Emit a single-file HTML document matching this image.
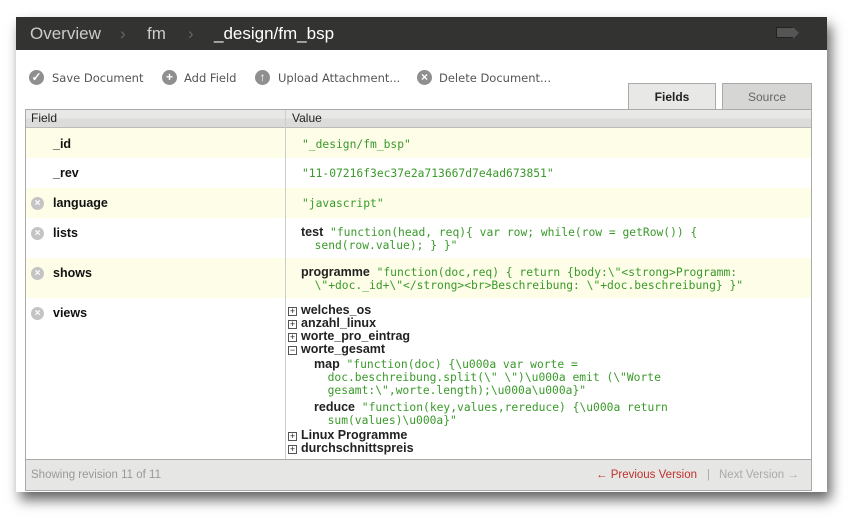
<!DOCTYPE html>
<html><head><meta charset="utf-8"><style>
*{margin:0;padding:0;box-sizing:border-box}
body{width:860px;height:524px;background:#fff;position:relative;overflow:hidden;font-family:"Liberation Sans",sans-serif}
.abs{position:absolute}
.win{left:16px;top:17px;width:811px;height:475px;background:#fff;box-shadow:4px 8px 12px rgba(0,0,0,.6)}
.hdr{left:16px;top:17px;width:811px;height:33px;background:#333331}
.hdr span{position:absolute;top:7px;font-size:17px;color:#ccc}
.tb{top:71px;font-family:"DejaVu Sans",sans-serif;font-size:11.5px;color:#555}
.ic{width:15px;height:15px;border-radius:50%;background:#8f8f8f;color:#fff;font-size:12px;line-height:15px;text-align:center;font-weight:bold}
.tab{top:83px;height:27px;border:1px solid #aaa;border-bottom:none;font-size:12px;text-align:center;line-height:26px}
.row{left:26px;width:785px;position:absolute}
.y{background:#fdfde8}
.lbl{position:absolute;left:27px;font-weight:bold;font-size:12.5px;color:#111}
.x{position:absolute;left:5px;width:13px;height:13px;border-radius:50%;background:#c4c4c4;color:#fff;font-size:10px;line-height:13px;text-align:center;font-weight:bold}
.v{position:absolute;left:276px;font-family:"DejaVu Sans Mono",monospace;font-size:11.3px;color:#3a9a2a;line-height:13px;white-space:pre}
.k{font-family:"Liberation Sans",sans-serif;font-weight:bold;font-size:12.5px;color:#222}
.vw{position:absolute;left:262px;font-family:"Liberation Sans",sans-serif;font-weight:bold;font-size:12.5px;color:#222;line-height:13px}
.pm{display:inline-block;width:9px;height:9px;border:1px solid #555;font-size:9px;line-height:7px;text-align:center;margin-right:4px;font-weight:normal;vertical-align:0}
</style></head><body>
<div class="abs win"></div>
<div class="abs hdr">
<span style="left:14px">Overview</span><span style="left:104px;color:#666">›</span>
<span style="left:131px">fm</span><span style="left:172px;color:#666">›</span>
<span style="left:198px;color:#fff">_design/fm_bsp</span>
<div class="abs" style="left:760px;top:10px;width:18px;height:11px;background:#555;border:1px solid #222"></div>
<div class="abs" style="left:777px;top:10px;width:0;height:0;border-top:6px solid transparent;border-bottom:6px solid transparent;border-left:6px solid #555"></div>
</div>
<div class="abs ic" style="left:29px;top:70px">✓</div><div class="abs tb" style="left:52px">Save Document</div>
<div class="abs ic" style="left:162px;top:70px">+</div><div class="abs tb" style="left:184px">Add Field</div>
<div class="abs ic" style="left:255px;top:70px">↑</div><div class="abs tb" style="left:278px">Upload Attachment...</div>
<div class="abs ic" style="left:417px;top:70px">×</div><div class="abs tb" style="left:439px">Delete Document...</div>
<div class="abs tab" style="left:628px;width:88px;background:#e8e8e6;font-weight:bold;color:#222;height:28px">Fields</div>
<div class="abs tab" style="left:722px;width:90px;background:#d6d6d4;color:#666">Source</div>
<div class="abs" style="left:25px;top:109px;width:787px;height:382px;border:1px solid #aaa"></div>
<div class="abs" style="left:26px;top:110px;width:785px;height:18px;background:linear-gradient(#e8e8e6 50%,#dcdcda 50%);border-bottom:1px solid #bbb;font-size:12px;color:#222"><span style="position:absolute;left:5px;top:1px">Field</span><span style="position:absolute;left:266px;top:1px">Value</span></div>
<div class="row y" style="top:128px;height:30px"><span class="lbl" style="top:9px">_id</span><span class="v" style="top:10px">"_design/fm_bsp"</span></div>
<div class="row" style="top:158px;height:30px"><span class="lbl" style="top:8px">_rev</span><span class="v" style="top:9px">"11-07216f3ec37e2a713667d7e4ad673851"</span></div>
<div class="row y" style="top:188px;height:30px"><span class="x" style="top:9px">×</span><span class="lbl" style="top:8px">language</span><span class="v" style="top:9px">"javascript"</span></div>
<div class="row" style="top:218px;height:40px"><span class="x" style="top:9px">×</span><span class="lbl" style="top:8px">lists</span><span class="v" style="top:8px;left:275px"><span class="k">test</span> "function(head, req){ var row; while(row = getRow()) {
  send(row.value); } }"</span></div>
<div class="row y" style="top:258px;height:40px"><span class="x" style="top:9px">×</span><span class="lbl" style="top:8px">shows</span><span class="v" style="top:8px;left:275px"><span class="k">programme</span> "function(doc,req) { return {body:\"&lt;strong&gt;Programm:
  \"+doc._id+\"&lt;/strong&gt;&lt;br&gt;Beschreibung: \"+doc.beschreibung} }"</span></div>
<div class="row" style="top:298px;height:162px;border-top:0"><span class="x" style="top:9px">×</span><span class="lbl" style="top:8px">views</span>
<div class="vw" style="top:6px"><span class="pm">+</span>welches_os</div>
<div class="vw" style="top:19px"><span class="pm">+</span>anzahl_linux</div>
<div class="vw" style="top:32px"><span class="pm">+</span>worte_pro_eintrag</div>
<div class="vw" style="top:45px"><span class="pm">−</span>worte_gesamt</div>
<span class="v" style="top:60px;left:288px"><span class="k">map</span> "function(doc) {\u000a var worte =
  doc.beschreibung.split(\" \")\u000a emit (\"Worte
  gesamt:\",worte.length);\u000a\u000a}"</span>
<span class="v" style="top:103px;left:288px"><span class="k">reduce</span> "function(key,values,rereduce) {\u000a return
  sum(values)\u000a}"</span>
<div class="vw" style="top:131px"><span class="pm">+</span>Linux Programme</div>
<div class="vw" style="top:144px"><span class="pm">+</span>durchschnittspreis</div>
</div>
<div class="abs" style="left:285px;top:110px;width:1px;height:350px;background:#ccc"></div>
<div class="abs" style="left:26px;top:459px;width:785px;height:31px;background:#e6e6e4;border-top:1px solid #aaa;font-size:11.5px">
<span style="position:absolute;left:5px;top:9px;color:#999">Showing revision 11 of 11</span>
<span style="position:absolute;left:570px;top:9px;color:#c0312b">← Previous Version</span>
<span style="position:absolute;left:681px;top:9px;color:#aaa">|</span>
<span style="position:absolute;left:693px;top:9px;color:#aaa">Next Version →</span>
</div>
</body></html>
